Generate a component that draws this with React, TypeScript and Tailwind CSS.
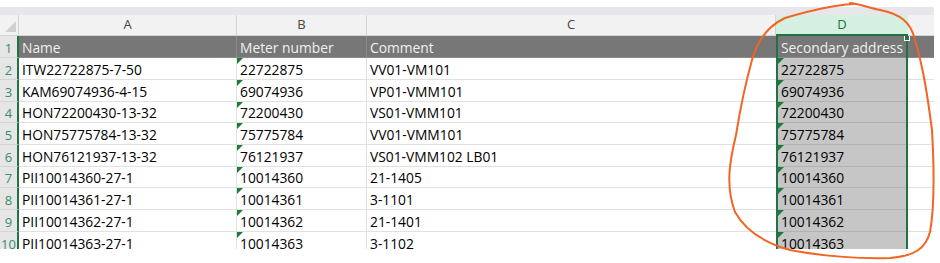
import React from "react";

const rows = [
  ["Name", "Meter number", "Comment", "Secondary address"],
  ["ITW22722875-7-50", "22722875", "VV01-VM101", "22722875"],
  ["KAM69074936-4-15", "69074936", "VP01-VMM101", "69074936"],
  ["HON72200430-13-32", "72200430", "VS01-VMM101", "72200430"],
  ["HON75775784-13-32", "75775784", "VV01-VMM101", "75775784"],
  ["HON76121937-13-32", "76121937", "VS01-VMM102 LB01", "76121937"],
  ["PII10014360-27-1", "10014360", "21-1405", "10014360"],
  ["PII10014361-27-1", "10014361", "3-1101", "10014361"],
  ["PII10014362-27-1", "10014362", "21-1401", "10014362"],
  ["PII10014363-27-1", "10014363", "3-1102", "10014363"],
];

const heights = ["h-[22px]", "h-[22px]", "h-[22px]", "h-[21px]", "h-[22px]", "h-[22px]", "h-[21px]", "h-[22px]", "h-[22px]", "h-[22px]"];

function Tri() {
  return (
    <span className="absolute left-0 top-0 w-0 h-0 border-t-[6px] border-t-[#1d7a3c] border-r-[6px] border-r-transparent" />
  );
}

export default function App() {
  return (
    <div
      className="relative w-[940px] h-[263px] bg-white overflow-hidden"
      style={{ fontFamily: "'Open Sans', Lato, sans-serif" }}
    >
      <div className="h-[7px]" />
      <div className="w-[934px] h-[8px] bg-[#e7e7eb]" />
      {/* column header row */}
      <div className="flex w-[934px] h-[21px] bg-[#f2f2f2] border-b border-[#d4d4d4] text-[13px] text-[#444]">
        <div className="relative w-[19px] border-r border-[#d4d4d4]">
          <span className="absolute right-[2px] bottom-[3px] w-0 h-0 border-b-[11px] border-b-[#d0d0d0] border-l-[11px] border-l-transparent" />
        </div>
        <div className="w-[218px] border-r border-[#d4d4d4] flex items-center justify-center">A</div>
        <div className="w-[130px] border-r border-[#d4d4d4] flex items-center justify-center">B</div>
        <div className="w-[409px] border-r border-[#d4d4d4] flex items-center justify-center">C</div>
        <div className="w-[132px] -mb-px bg-[#d3f0e0] border-b-2 border-[#217346] flex items-center justify-center text-[#217346]">D</div>
        <div className="w-[26px]" />
      </div>
      {/* data rows */}
      <div className="h-[213px] overflow-hidden">
        {rows.map((r, i) => {
          const head = i === 0;
          const cellBase = head
            ? "bg-[#777777] text-[#f0f0f0] border-r border-[#8a8a8a]"
            : "bg-white text-black border-r border-[#e1e1e1]";
          return (
            <div key={i} className={`flex w-[934px] ${heights[i]} text-[13.8px] leading-[18px]`}>
              <div className="w-[19px] shrink-0 bg-[#e6e6e6] border-r-2 border-[#217346] border-b border-b-[#d4d4d4] flex items-end justify-center text-[13px] text-[#3b8d66]">
                {i + 1}
              </div>
              <div className={`w-[218px] shrink-0 px-[3px] flex items-end border-b ${head ? "border-b-[#8a8a8a]" : "border-b-[#e1e1e1]"} ${cellBase}`}>
                {r[0]}
              </div>
              <div className={`relative w-[130px] shrink-0 px-[3px] flex items-end border-b ${head ? "border-b-[#8a8a8a]" : "border-b-[#e1e1e1]"} ${cellBase}`}>
                {!head && <Tri />}
                {r[1]}
              </div>
              <div className={`w-[409px] shrink-0 px-[3px] flex items-end border-b ${head ? "border-b-[#8a8a8a] bg-[#777777] text-[#f0f0f0]" : "border-b-[#e1e1e1] bg-white text-black"}`}>
                {r[2]}
              </div>
              <div className={`relative w-[132px] shrink-0 border-x-2 border-[#217346]`}>
                <div className={`h-full px-[3px] flex items-end whitespace-nowrap border-b ${head ? "bg-[#777777] text-[#f0f0f0] border-b-[#8a8a8a]" : "bg-[#c6c6c6] text-black border-b-[#b2b2b2]"}`}>
                  {!head && <Tri />}
                  {r[3]}
                </div>
                {head && (
                  <span className="absolute -right-[4px] -top-[1px] w-[6px] h-[6px] bg-[#217346] border border-white" />
                )}
              </div>
              <div className={`w-[26px] shrink-0 border-b ${head ? "bg-[#777777] border-b-[#8a8a8a]" : "bg-white border-b-[#e1e1e1]"}`} />
            </div>
          );
        })}
      </div>
      <svg className="absolute left-0 top-0 pointer-events-none" width="940" height="263" viewBox="0 0 940 263">
        <path
          d="M 853 4 C 835 5, 805 12, 785 18 C 768 26, 757 42, 752 60 C 745 85, 740 110, 736 135 C 730 160, 725 185, 735 212 C 745 230, 765 243, 790 250 C 820 256, 860 259, 890 258 C 915 256, 926 248, 930 232 C 935 205, 934 165, 932 130 C 928 100, 924 70, 915 40 C 911 22, 900 14, 880 10 C 870 8, 860 4, 850 3"
          fill="none"
          stroke="#f26522"
          strokeWidth="2"
          strokeLinecap="round"
        />
      </svg>
    </div>
  );
}
